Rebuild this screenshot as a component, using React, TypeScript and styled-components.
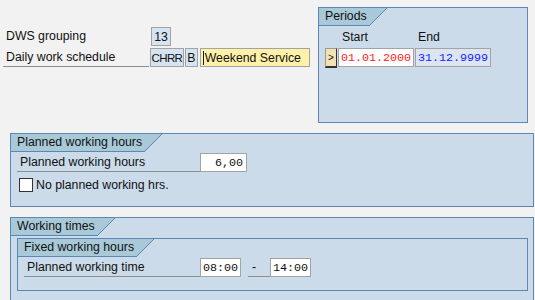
import React from 'react';
import styled, { createGlobalStyle } from 'styled-components';

const GlobalStyle = createGlobalStyle`
    html, body {
        margin: 0;
        padding: 0;
        background: #f2f2f2;
    }
`

const PANEL = '#cbdbe9'
const BORDER = '#5b88b3'
const TAB = '#a9c9d8'
const FIELD_BORDER = '#a3a3a3'

type TabProps = { label: string }

function GroupTab(props: TabProps) {
    return <TabRow>
        <TabLabel>{ props.label }</TabLabel>
        <svg width="17" height="18" viewBox="0 0 17 18">
            <polygon points="0,0 17,0 0,17" fill={TAB} />
            <line x1="-0.5" y1="17.5" x2="17" y2="0" stroke={BORDER} strokeWidth="1" />
        </svg>
    </TabRow>
}

export default function App() {
    return <Page>
        <GlobalStyle />
        <TopArea>
            <HeaderForm>
                <FormRow>
                    <Label>DWS grouping</Label>
                    <ReadOnly $width={20}>13</ReadOnly>
                </FormRow>
                <FormRow>
                    <Label $underline>Daily work schedule</Label>
                    <ReadOnly $width={34} $tight>CHRR</ReadOnly>
                    <ReadOnly $width={13}>B</ReadOnly>
                    <InputField $width={111}><Caret />Weekend Service</InputField>
                </FormRow>
            </HeaderForm>

            <PeriodsPanel>
                <GroupTab label="Periods" />
                <PeriodsGrid>
                    <span />
                    <ColumnHead>Start</ColumnHead>
                    <ColumnHead>End</ColumnHead>
                    <SelectButton>&gt;</SelectButton>
                    <MonoField $width={76} $color="#ff1a1a">01.01.2000</MonoField>
                    <MonoField $width={76} $color="#1a1aff" $readOnly>31.12.9999</MonoField>
                </PeriodsGrid>
            </PeriodsPanel>
        </TopArea>

        <Panel $height={74}>
            <GroupTab label="Planned working hours" />
            <PanelBody>
                <FieldRow>
                    <Label $underline $width={183}>Planned working hours</Label>
                    <MonoField $width={47} $align="right">6,00</MonoField>
                </FieldRow>
                <CheckRow>
                    <CheckBox />
                    <span>No planned working hrs.</span>
                </CheckRow>
            </PanelBody>
        </Panel>

        <Panel $height={100}>
            <GroupTab label="Working times" />
            <PanelBody $right={5}>
                <InnerGroup>
                    <GroupTab label="Fixed working hours" />
                    <PanelBody>
                        <FieldRow>
                            <Label $underline $width={176}>Planned working time</Label>
                            <MonoField $width={41}>08:00</MonoField>
                            <Dash>-</Dash>
                            <MonoField $width={41}>14:00</MonoField>
                        </FieldRow>
                    </PanelBody>
                </InnerGroup>
            </PanelBody>
        </Panel>
    </Page>
}

const Page = styled.div`
    width: 535px;
    height: 300px;
    overflow: hidden;
    background: #f2f2f2;
    font-family: "Liberation Sans", Arial, sans-serif;
    font-size: 12.3px;
    color: #111;
`

const TopArea = styled.div`
    display: flex;
    align-items: flex-start;
`

const HeaderForm = styled.div`
    display: flex;
    flex-direction: column;
    gap: 2px;
    width: 307px;
    margin: 27px 0 0 3px;
`

const FormRow = styled.div`
    display: flex;
    align-items: stretch;
    gap: 1px;
    height: 19px;
`

const Label = styled.div<{ $underline?: boolean, $width?: number }>`
    display: flex;
    align-items: center;
    box-sizing: border-box;
    width: ${p => p.$width ?? 147}px;
    padding-left: 3px;
    white-space: nowrap;
    border-bottom: 1px solid ${p => p.$underline ? '#8e8e8e' : 'transparent'};
`

const ReadOnly = styled.div<{ $width: number, $tight?: boolean }>`
    display: flex;
    align-items: center;
    justify-content: center;
    box-sizing: border-box;
    width: ${p => p.$width}px;
    font-size: ${p => p.$tight ? '11.5px' : 'inherit'};
    letter-spacing: ${p => p.$tight ? '-0.6px' : 'normal'};
    background: #d6e3f0;
    border: 1px solid ${FIELD_BORDER};
`

const InputField = styled.div<{ $width: number }>`
    display: flex;
    align-items: center;
    box-sizing: border-box;
    width: ${p => p.$width}px;
    margin-left: 1px;
    padding-left: 2px;
    background: #fff1a8;
    border: 1px solid ${FIELD_BORDER};
    white-space: nowrap;
`

const Caret = styled.span`
    display: inline-block;
    width: 1px;
    height: 14px;
    background: #0a1a4a;
    margin-right: 1px;
`

const PeriodsPanel = styled.div`
    box-sizing: border-box;
    width: 210px;
    height: 116px;
    margin: 7px 0 0 8px;
    background: ${PANEL};
    border: 1px solid ${BORDER};
`

const PeriodsGrid = styled.div`
    display: grid;
    grid-template-columns: 12px 76px 76px;
    grid-template-rows: 22px 19px;
    column-gap: 1px;
    padding-left: 6px;
    align-items: center;

    > :nth-child(2) { margin-left: 1px; }
`

const ColumnHead = styled.div`
    align-self: end;
    padding: 0 0 4px 3px;
`

const SelectButton = styled.div`
    display: flex;
    align-items: center;
    justify-content: center;
    box-sizing: border-box;
    height: 20px;
    margin-top: 1px;
    font-size: 10px;
    background: #f4e2b0;
    border: 1px solid #9a9a9a;
    border-right-color: #333;
    border-bottom: 2px solid #333;
`

const MonoField = styled.div<{ $width: number, $color?: string, $readOnly?: boolean, $align?: string }>`
    display: flex;
    align-items: center;
    justify-content: ${p => p.$align === 'right' ? 'flex-end' : 'flex-start'};
    box-sizing: border-box;
    width: ${p => p.$width}px;
    height: 19px;
    padding: 0 3px 0 2px;
    font-family: "Liberation Mono", "Courier New", monospace;
    font-size: 11.7px;
    color: ${p => p.$color ?? '#111'};
    background: ${p => p.$readOnly ? '#dbe6f2' : '#fff'};
    border: 1px solid ${FIELD_BORDER};
    white-space: nowrap;
`

const Panel = styled.div<{ $height: number }>`
    box-sizing: border-box;
    width: 524px;
    height: ${p => p.$height}px;
    margin: 10px 0 0 10px;
    background: ${PANEL};
    border: 1px solid ${BORDER};
`

const TabRow = styled.div`
    display: flex;
    height: 18px;

    > svg { display: block; flex: none; }
`

const TabLabel = styled.div`
    box-sizing: border-box;
    height: 18px;
    padding: 0 3px 0 6px;
    line-height: 17px;
    white-space: nowrap;
    background: ${TAB};
    border-bottom: 1px solid ${BORDER};
`

const PanelBody = styled.div<{ $right?: number }>`
    display: flex;
    flex-direction: column;
    padding: 1px ${p => p.$right ?? 0}px 0 6px;
`

const FieldRow = styled.div`
    display: flex;
    align-items: stretch;
    height: 19px;
`

const CheckRow = styled.div`
    display: flex;
    align-items: center;
    gap: 3px;
    margin: 6px 0 0 2px;
`

const CheckBox = styled.div`
    box-sizing: border-box;
    width: 14px;
    height: 14px;
    background: #fff;
    border: 1px solid #333;
`

const InnerGroup = styled.div`
    box-sizing: border-box;
    height: 53px;
    margin-top: 1px;
    border: 1px solid ${BORDER};
`

const Dash = styled.div`
    display: flex;
    align-items: center;
    box-sizing: border-box;
    width: 22px;
    margin-left: 7px;
    padding-left: 4px;
    border-bottom: 1px solid #8e8e8e;
`
